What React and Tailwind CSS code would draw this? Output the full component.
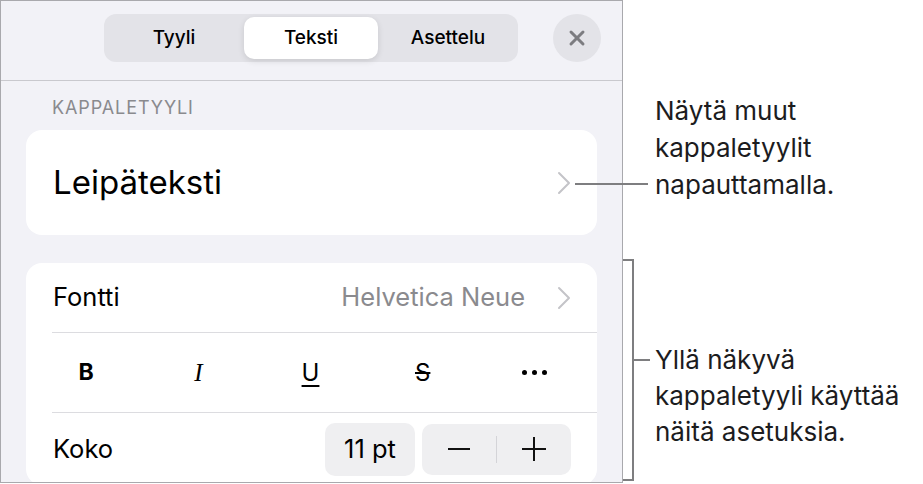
import { X } from "lucide-react";

const font = { fontFamily: "Inter, 'Noto Sans', sans-serif" };

function Chevron() {
  return (
    <svg width="14" height="24" viewBox="0 0 14 24" className="shrink-0">
      <polyline points="2,2 12,12 2,22" fill="none" stroke="#c4c4c8" strokeWidth="2" strokeLinecap="round" strokeLinejoin="round" />
    </svg>
  );
}

function Segments() {
  const tabs = ["Tyyli", "Teksti", "Asettelu"];
  return (
    <div className="flex h-[48px] w-[414px] rounded-[12px] bg-[#e3e3e8] p-[3px]">
      {tabs.map((tab) => (
        <div
          key={tab}
          className={
            tab === "Teksti"
              ? "mx-[3px] flex flex-1 items-center justify-center rounded-[10px] bg-white text-[19px] font-medium text-black shadow-[0_2px_6px_rgba(0,0,0,0.12)]"
              : "flex flex-1 items-center justify-center text-[19px] font-medium text-black"
          }
        >
          {tab}
        </div>
      ))}
    </div>
  );
}

export default function App() {
  return (
    <div className="relative flex h-[484px] w-[923px] overflow-hidden bg-white" style={font}>
      <div className="flex h-[483px] w-[623px] shrink-0 flex-col overflow-hidden border border-[#a9a9ad] bg-[#f2f2f7]">
        <div className="flex h-[80px] shrink-0 items-start gap-[35px] border-b border-[#c9c9ce] pl-[103px] pt-[13px]">
          <Segments />
          <div className="flex h-[48px] w-[48px] items-center justify-center rounded-full bg-[#e3e3e8]">
            <X size={24} strokeWidth={3} color="#7c7c80" />
          </div>
        </div>

        <div className="mt-[17px] pl-[51px] text-[18px] leading-[20px] tracking-[0.05em] text-[#8a8a8e]">KAPPALETYYLI</div>

        <div className="mx-[25px] mt-[12px] flex h-[105px] shrink-0 items-center justify-between rounded-[16px] bg-white pl-[27px] pr-[26px]">
          <span className="text-[33px] text-black">Leipäteksti</span>
          <Chevron />
        </div>

        <div className="mx-[25px] mt-[28px] shrink-0 rounded-[16px] bg-white">
          <div className="flex h-[69px] items-center justify-between pl-[27px] pr-[26px]">
            <span className="text-[25.5px] text-black">Fontti</span>
            <div className="flex items-center gap-[32px]">
              <span className="text-[25.5px] text-[#8a8a8e]">Helvetica Neue</span>
              <Chevron />
            </div>
          </div>
          <div className="ml-[26px] h-px bg-[#dcdce0]" />
          <div className="grid h-[79px] grid-cols-5 items-center pl-[4px] pr-[6px] text-black">
            <div className="text-center text-[23px] font-bold">B</div>
            <div className="text-center text-[25px] italic" style={{ fontFamily: "'Liberation Serif', serif" }}>I</div>
            <div className="text-center text-[24px] underline decoration-[2px] underline-offset-[4px]">U</div>
            <div className="text-center text-[24px] line-through decoration-[2px]">S</div>
            <div className="flex items-center justify-center gap-[5px]">
              <span className="h-[5px] w-[5px] rounded-full bg-black" />
              <span className="h-[5px] w-[5px] rounded-full bg-black" />
              <span className="h-[5px] w-[5px] rounded-full bg-black" />
            </div>
          </div>
          <div className="ml-[26px] h-px bg-[#dcdce0]" />
          <div className="flex h-[72px] items-center justify-between pl-[27px] pr-[26px]">
            <span className="text-[25.5px] text-black">Koko</span>
            <div className="flex items-center gap-[7px]">
              <div className="flex h-[53px] w-[90px] items-center justify-center rounded-[10px] bg-[#efeff1] text-[25.5px] text-black">11 pt</div>
              <div className="flex h-[51px] w-[149px] items-center rounded-[10px] bg-[#efeff1]">
                <div className="flex flex-1 items-center justify-center">
                  <svg width="24" height="24" viewBox="0 0 24 24"><line x1="1" y1="12" x2="23" y2="12" stroke="#111" strokeWidth="2" /></svg>
                </div>
                <div className="h-[27px] w-px bg-[#d4d4d8]" />
                <div className="flex flex-1 items-center justify-center">
                  <svg width="28" height="28" viewBox="0 0 28 28"><line x1="2" y1="14" x2="26" y2="14" stroke="#111" strokeWidth="2" /><line x1="14" y1="2" x2="14" y2="26" stroke="#111" strokeWidth="2" /></svg>
                </div>
              </div>
            </div>
          </div>
        </div>
      </div>

      <div className="flex flex-col pl-[32px] text-[26px] text-[#1c1c1e]">
        <div className="mt-[92px] leading-[37px]">
          <div>Näytä muut</div>
          <div>kappaletyylit</div>
          <div>napauttamalla.</div>
        </div>
        <div className="mt-[139px] leading-[36px]">
          <div>Yllä näkyvä</div>
          <div className="whitespace-nowrap">kappaletyyli käyttää</div>
          <div>näitä asetuksia.</div>
        </div>
      </div>

      <svg className="pointer-events-none absolute left-0 top-0" width="923" height="484">
        <line x1="575" y1="184" x2="648" y2="184" stroke="#7e7e80" strokeWidth="2" />
        <path d="M623 260 H633 V480 H623" fill="none" stroke="#7e7e80" strokeWidth="2" />
        <line x1="633" y1="360" x2="650" y2="360" stroke="#7e7e80" strokeWidth="2" />
      </svg>
    </div>
  );
}
